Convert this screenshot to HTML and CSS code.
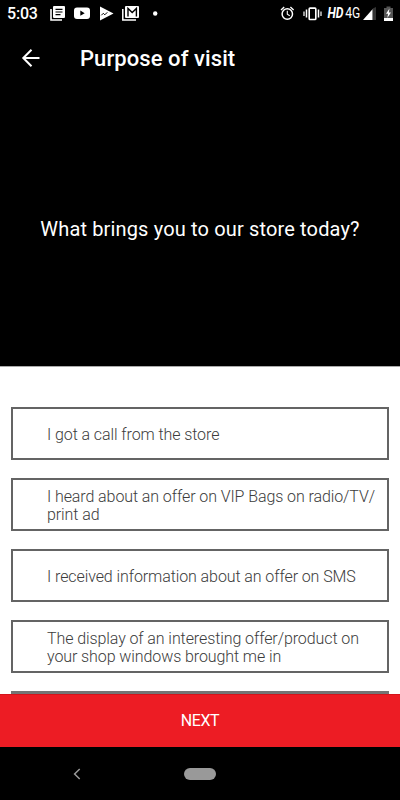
FILE: index.html
```html
<!DOCTYPE html>
<html lang="en">
<head>
<meta charset="utf-8">
<title>Purpose of visit</title>
<link rel="stylesheet" href="styles.css">
</head>
<body>
<div class="screen">
  <div class="statusbar">
    <span class="clock">5:03</span>
    <svg class="notifications" width="112" height="28" viewBox="50 0 112 28">
      <path d="M51 9v11h11" fill="none" stroke="#fff" stroke-width="1.6"/>
      <rect x="53" y="6" width="12" height="12" rx="1" fill="#fff"/>
      <path d="M55.5 9.3h7M55.5 12h7M55.5 14.7h5" stroke="#000" stroke-width="1.2"/>
      <rect x="74" y="7.5" width="16" height="11.5" rx="3" fill="#fff"/>
      <path d="M80.3 10.6v5.2l4.4-2.6z" fill="#000"/>
      <path d="M100 6.5v14l13.5-7z" fill="#fff"/>
      <path d="M101.3 15.3l2-2 1.5 1.5 2.5-2.5" fill="none" stroke="#000" stroke-width="1"/>
      <path d="M122.8 9v11H136" fill="none" stroke="#fff" stroke-width="1.5"/>
      <rect x="125" y="6" width="14" height="12" rx="1" fill="#fff"/>
      <path d="M128 16.5V8.5l4.2 4 4.2-4v8" fill="none" stroke="#000" stroke-width="1.4"/>
      <circle cx="155.2" cy="13.5" r="2.2" fill="#fff"/>
    </svg>
    <svg class="system" width="46" height="28" viewBox="278 0 46 28">
      <g fill="none" stroke="#fff">
        <circle cx="287.3" cy="14" r="5.2" stroke-width="1.5"/>
        <path d="M287.3 10.8v3.5l2.5 1.5" stroke-width="1.1"/>
        <path d="M281 10l3.2-2.9M293.6 10l-3.2-2.9" stroke-width="1.4"/>
        <rect x="309.2" y="8.1" width="6.6" height="11.4" rx=".8" stroke-width="1.6"/>
        <path d="M306.5 9.5v8M318.5 9.5v8" stroke-width="1.5"/>
        <path d="M304 11.5v4.5M321 11.5v4.5" stroke-width="1.2"/>
      </g>
    </svg>
    <svg class="network" width="70" height="28" viewBox="326 0 70 28">
      <text class="hd" x="327.5" y="18.3" textLength="16" lengthAdjust="spacingAndGlyphs">HD</text>
      <text class="fourg" x="345.3" y="18.3" textLength="15" lengthAdjust="spacingAndGlyphs">4G</text>
      <path d="M363 20l9.7-11V20z" fill="#fff"/>
      <path d="M372.7 8.5L376 7v13h-3.3z" fill="#333"/>
      <path d="M384 8h2.5V6.5h4V8h2.5v10h-9z" fill="#555"/>
      <path d="M384 18h9v3h-9z" fill="#fff"/>
      <path d="M389.5 8.5l-3.5 5.2h2.1l-.8 4.3 3.7-5.4h-2.2z" fill="#fff"/>
    </svg>
  </div>
  <header class="toolbar">
    <svg class="back" width="20" height="20" viewBox="0 0 20 20"><path d="M18.5 10H3M10.5 1.8L2.3 10l8.2 8.2" fill="none" stroke="#fff" stroke-width="2"/></svg>
    <h1>Purpose of visit</h1>
  </header>
  <section class="question"><p>What brings you to our store today?</p></section>
  <main class="options">
    <div class="option"><span>I got a call from the store</span></div>
    <div class="option"><span>I heard about an offer on VIP Bags on radio/TV/<br>print ad</span></div>
    <div class="option"><span>I received information about an offer on SMS</span></div>
    <div class="option"><span>The display of an interesting offer/product on<br>your shop windows brought me in</span></div>
    <div class="option"></div>
  </main>
  <div class="next">NEXT</div>
  <nav class="navbar">
    <svg width="8" height="12" viewBox="0 0 8 12"><path d="M6.7 1L1.6 6l5.1 5" fill="none" stroke="#999" stroke-width="1.5"/></svg>
    <span class="home"></span>
  </nav>
</div>
</body>
</html>
```
FILE: styles.css
```css
* { box-sizing: border-box; }
body { margin: 0; font-family: Roboto, sans-serif; }
.screen { width: 400px; height: 800px; display: flex; flex-direction: column; overflow: hidden; background: #fff; }
.statusbar { flex: none; height: 28px; display: flex; background: #000; color: #fff; padding-left: 7px; }
.clock { width: 43px; font-size: 16px; font-weight: 500; line-height: 28px; letter-spacing: -0.2px; }
.system { margin-left: 116px; }
.network { margin-left: 2px; }
.network text { fill: #fff; font-size: 14.5px; }
.network .hd { font-size: 14px; font-weight: 700; font-style: italic; }
.toolbar { flex: none; height: 60px; background: #000; color: #fff; display: flex; align-items: center; padding-left: 21px; }
.back { margin-right: 39px; }
.toolbar h1 { margin: 0; padding-top: 2px; font-size: 22px; font-weight: 500; line-height: 30px; letter-spacing: 0.08px; }
.question { flex: none; height: 278px; background: #000; color: #fff; text-align: center; padding-top: 125px; }
.question p { margin: 0; font-size: 20px; line-height: 32px; letter-spacing: 0.15px; }
.options { flex: 1; min-height: 0; overflow: hidden; border-top: 1px solid #aaa; padding: 40px 11px 0; display: flex; flex-direction: column; gap: 18px; }
.option { flex: none; height: 53px; border: 2px solid #646464; padding: 2px 0 0 34px; display: flex; align-items: center; white-space: nowrap; font-size: 16px; font-weight: 300; line-height: 18px; letter-spacing: -0.09px; color: #3c3c3c; }
.option:last-child { border-top-width: 3px; border-color: #757575; }
.next { flex: none; height: 53px; background: #ed1c24; color: #fff; border-top: 1px solid #d5141b; text-align: center; font-size: 16px; line-height: 52px; letter-spacing: -0.4px; }
.navbar { flex: none; height: 53px; background: #000; display: grid; grid-template-columns: 8px 32px; column-gap: 103px; padding-left: 73px; align-items: center; }
.home { height: 12px; border-radius: 6px; background: #999; }
```
